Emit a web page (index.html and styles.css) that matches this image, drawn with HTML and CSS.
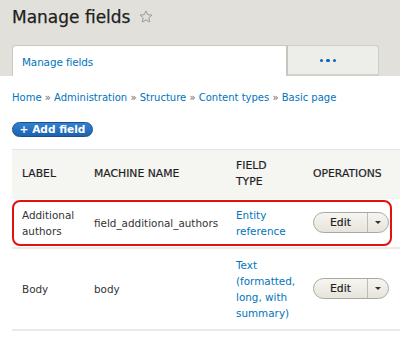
FILE: index.html
```html
<!DOCTYPE html>
<html>
<head>
<meta charset="utf-8">
<link rel="stylesheet" href="styles.css">
</head>
<body>
<header class="page-header">
  <h1 class="title">Manage fields <svg class="star" width="14" height="14" viewBox="0 0 14 14"><path d="M7 0.9 L8.75 4.7 L12.9 5.1 L9.8 7.9 L10.7 12 L7 9.9 L3.3 12 L4.2 7.9 L1.1 5.1 L5.25 4.7 Z" fill="none" stroke="#9a9a96" stroke-width="1"/></svg></h1>
  <nav class="tabs">
    <a class="tab tab-active" href="#">Manage fields</a>
    <a class="tab tab-more" href="#"><span class="dot"></span><span class="dot"></span><span class="dot"></span></a>
  </nav>
</header>
<main class="content">
  <div class="breadcrumb"><a href="#">Home</a> » <a href="#">Administration</a> » <a href="#">Structure</a> » <a href="#">Content types</a> » <a href="#">Basic page</a></div>
  <a class="add-btn" href="#">+ Add field</a>
  <div class="table-wrap">
    <table class="fields">
      <colgroup><col class="c1"><col class="c2"><col class="c3"><col class="c4"></colgroup>
      <thead>
        <tr><th>LABEL</th><th>MACHINE NAME</th><th>FIELD<br>TYPE</th><th>OPERATIONS</th></tr>
      </thead>
      <tbody>
        <tr class="row1">
          <td>Additional<br>authors</td>
          <td>field_additional_authors</td>
          <td><a href="#">Entity<br>reference</a></td>
          <td><span class="dropbutton"><span class="edit">Edit</span><span class="toggle"><span class="caret"></span></span></span></td>
        </tr>
        <tr class="row2">
          <td>Body</td>
          <td>body</td>
          <td><a href="#">Text<br>(formatted,<br>long, with<br>summary)</a></td>
          <td><span class="dropbutton"><span class="edit">Edit</span><span class="toggle"><span class="caret"></span></span></span></td>
        </tr>
      </tbody>
    </table>
    <div class="highlight"></div>
  </div>
</main>
</body>
</html>
```
FILE: styles.css
```css
html, body {
  margin: 0;
  padding: 0;
  background: #fff;
}
body {
  font-family: "DejaVu Sans", sans-serif;
  font-size: 10.4px;
  color: #333;
  width: 400px;
  overflow: hidden;
}
a {
  color: #0074bd;
  text-decoration: none;
}
.page-header {
  background: #e1e0da;
  padding: 0 0 0 12px;
  height: 76px;
  display: flex;
  flex-direction: column;
  justify-content: space-between;
}
.title {
  margin: 0;
  padding-top: 5px;
  font-size: 17px;
  font-weight: normal;
  color: #1f1f1f;
  line-height: 24px;
  display: flex;
  align-items: center;
  gap: 9px;
  -webkit-text-stroke: 0.25px #1f1f1f;
}
.star {
  margin-top: -1px;
}
.tabs {
  display: flex;
  height: 31px;
}
.tab {
  display: flex;
  align-items: center;
  box-sizing: border-box;
  height: 31px;
}
.tab-active {
  width: 275px;
  background: #fff;
  border: 1px solid #c9c8c1;
  border-bottom: none;
  border-radius: 4px 0 0 0;
  padding: 1px 0 0 9px;
  letter-spacing: -0.1px;
}
.tab-more {
  width: 92px;
  background: #ededea;
  border: 1px solid #cfcec8;
  border-left: 1px solid #c4c3bc;
  border-bottom: 2px solid #d2d1cb;
  border-radius: 0 4px 0 0;
  justify-content: center;
  gap: 3px;
  padding: 1px 10px 0 0;
}
.dot {
  width: 3.5px;
  height: 3.5px;
  border-radius: 50%;
  background: #0a62b8;
}
.content {
  padding: 14px 0 0 12px;
}
.breadcrumb {
  line-height: 16px;
  color: #666;
  font-size: 10px;
}
.add-btn {
  display: inline-block;
  margin-top: 16px;
  height: 15px;
  box-sizing: border-box;
  width: 81px;
  text-align: center;
  border-radius: 8px;
  background: linear-gradient(#3282d3, #1d62ad);
  border: 1px solid #1a4f8a;
  color: #fff;
  font-weight: bold;
  font-size: 10.6px;
  line-height: 13px;
}
.table-wrap {
  position: relative;
  margin-top: 12px;
}
.fields {
  width: 388px;
  border-collapse: collapse;
  table-layout: fixed;
}
.c1 { width: 72px; }
.c2 { width: 142px; }
.c3 { width: 77px; }
.c4 { width: 97px; }
th {
  background: #f5f5f2;
  text-align: left;
  font-weight: normal;
  font-size: 10.8px;
  color: #1f1f1f;
  height: 49px;
  padding: 0 0 0 10px;
  line-height: 16px;
  border-top: 1px solid #e6e5e1;
  box-sizing: border-box;
  -webkit-text-stroke: 0.2px #1f1f1f;
}
td {
  padding: 0 0 0 10px;
  line-height: 16px;
  vertical-align: middle;
  color: #333;
}
.row1 td {
  height: 48px;
  border-bottom: 2px solid #ebeae6;
}
.row2 td {
  height: 80px;
  border-bottom: 2px solid #ebeae6;
}
.dropbutton {
  display: inline-flex;
  box-sizing: border-box;
  width: 76px;
  height: 21px;
  border: 1px solid #a9a8a2;
  border-radius: 11px;
  background: linear-gradient(#f6f5f0, #e6e4dc);
  overflow: hidden;
}
.edit {
  flex: 1;
  display: flex;
  align-items: center;
  justify-content: center;
  color: #1f1f1f;
  border-right: 1px solid #bcbbb4;
  font-size: 10.8px;
  -webkit-text-stroke: 0.2px #1f1f1f;
}
.toggle {
  width: 20px;
  display: flex;
  align-items: center;
  justify-content: center;
}
.caret {
  width: 0;
  height: 0;
  border-left: 3px solid transparent;
  border-right: 3px solid transparent;
  border-top: 3px solid #333;
  margin-left: -1px;
}
.highlight {
  position: absolute;
  left: 0;
  top: 51px;
  width: 380px;
  height: 46px;
  box-sizing: border-box;
  border: 2.5px solid #e3120f;
  border-radius: 8px;
  pointer-events: none;
}
```
